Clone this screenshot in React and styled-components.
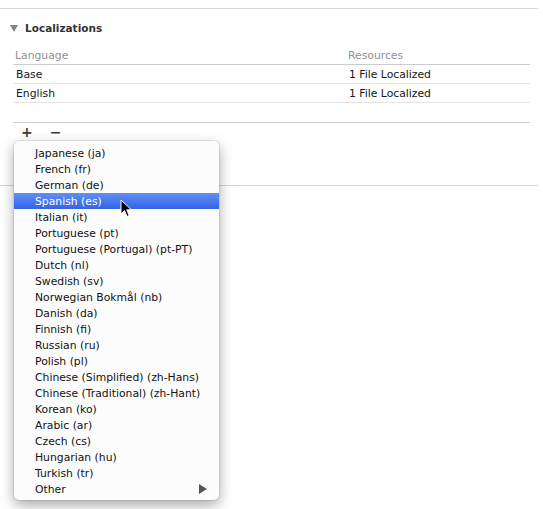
import styled, { createGlobalStyle } from 'styled-components';

const GlobalStyle = createGlobalStyle`
  html, body {
    margin: 0;
    padding: 0;
    background: #ffffff;
  }
  body {
    font-family: "DejaVu Sans", "Liberation Sans", sans-serif;
    font-size: 10.8px;
    color: #1a1a1a;
  }
`;

const Page = styled.div`
  position: relative;
  width: 543px;
  height: 509px;
  overflow: hidden;
  padding-top: 8px;
  box-sizing: border-box;
`;

const Divider = styled.div`
  width: ${(p) => p.width || 538}px;
  border-top: 1px solid #d6d6d6;
`;

const Section = styled.section`
  display: flex;
  flex-direction: column;
`;

const SectionHeader = styled.div`
  display: flex;
  align-items: center;
  gap: 7px;
  height: 16px;
  margin-top: 11px;
  padding-left: 10px;
  font-weight: 700;
  font-size: 10.5px;
  color: #333;
`;

const Disclosure = styled.span`
  width: 0;
  height: 0;
  border-left: 4.5px solid transparent;
  border-right: 4.5px solid transparent;
  border-top: 7px solid #858585;
`;

const Table = styled.div`
  margin: 10px 0 0 13px;
  width: 517px;
`;

const Row = styled.div`
  display: grid;
  grid-template-columns: 333px 1fr;
  align-items: center;
  height: 18px;
  padding-left: ${(p) => (p.header ? 2 : 3)}px;
  border-bottom: 1px solid ${(p) => (p.header ? '#cdcdcd' : '#e4e4e4')};
  color: ${(p) => (p.header ? '#919191' : '#151515')};
`;

const Filler = styled.div`
  height: 19px;
  border-bottom: 1px solid #cfcfcf;
`;

const ButtonBar = styled.div`
  display: flex;
  align-items: center;
  gap: 17px;
  height: 18px;
  padding-left: 8px;
  color: #3a3a3a;
  font-size: 14px;
  font-weight: 700;
`;

const Spacer = styled.div`
  height: 44px;
`;

const Menu = styled.div`
  position: absolute;
  left: 14px;
  top: 141px;
  width: 205px;
  padding: 4px 0 3px;
  background: #fcfcfc;
  border-radius: 5px;
  box-shadow: 0 0 0 1px rgba(0, 0, 0, 0.08), 0 5px 14px rgba(0, 0, 0, 0.35);
`;

const Item = styled.div`
  display: flex;
  align-items: center;
  justify-content: space-between;
  height: 16px;
  padding: 0 12px 0 21px;
  white-space: nowrap;
  color: ${(p) => (p.active ? '#ffffff' : '#111')};
  background: ${(p) =>
    p.active ? 'linear-gradient(#618ff5, #3463e6)' : 'transparent'};
`;

const SubArrow = styled.span`
  width: 0;
  height: 0;
  border-top: 5px solid transparent;
  border-bottom: 5px solid transparent;
  border-left: 8px solid #555;
`;

const Cursor = styled.svg`
  position: absolute;
  left: 120px;
  top: 199px;
`;

const languages = [
  'Japanese (ja)',
  'French (fr)',
  'German (de)',
  'Spanish (es)',
  'Italian (it)',
  'Portuguese (pt)',
  'Portuguese (Portugal) (pt-PT)',
  'Dutch (nl)',
  'Swedish (sv)',
  'Norwegian Bokmål (nb)',
  'Danish (da)',
  'Finnish (fi)',
  'Russian (ru)',
  'Polish (pl)',
  'Chinese (Simplified) (zh-Hans)',
  'Chinese (Traditional) (zh-Hant)',
  'Korean (ko)',
  'Arabic (ar)',
  'Czech (cs)',
  'Hungarian (hu)',
  'Turkish (tr)',
];

const App = () => {
  return (
    <Page>
      <GlobalStyle />
      <Divider />
      <Section>
        <SectionHeader>
          <Disclosure />
          Localizations
        </SectionHeader>
        <Table>
          <Row header>
            <span>Language</span>
            <span>Resources</span>
          </Row>
          <Row>
            <span>Base</span>
            <span>1 File Localized</span>
          </Row>
          <Row>
            <span>English</span>
            <span>1 File Localized</span>
          </Row>
          <Filler />
          <ButtonBar>
            <span>+</span>
            <span>−</span>
          </ButtonBar>
        </Table>
        <Spacer />
        <Divider />
      </Section>

      <Menu>
        {languages.map((lang) => (
          <Item key={lang} active={lang === 'Spanish (es)'}>
            {lang}
          </Item>
        ))}
        <Item>
          Other
          <SubArrow />
        </Item>
      </Menu>

      <Cursor width="13" height="19" viewBox="0 0 13 19">
        <path
          d="M1 1 L1 15 L4.5 11.5 L7 17.5 L9.2 16.6 L6.8 10.8 L11.5 10.8 Z"
          fill="#000"
          stroke="#fff"
          strokeWidth="1"
          strokeLinejoin="round"
        />
      </Cursor>
    </Page>
  );
};

export default App;
